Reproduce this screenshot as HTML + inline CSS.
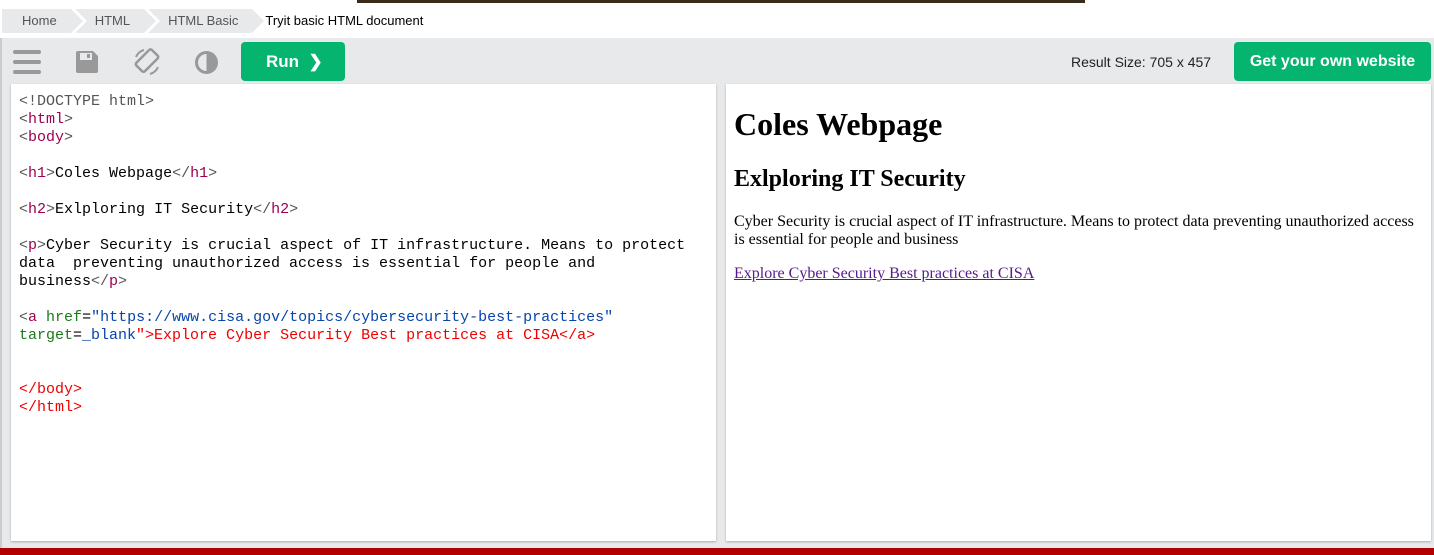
<!DOCTYPE html>
<html><head><style>
*{margin:0;padding:0;box-sizing:border-box}
body{width:1434px;height:555px;overflow:hidden;background:#fff;font-family:"Liberation Sans",sans-serif;position:relative}
.topimg{position:absolute;left:357px;top:0;width:728px;height:3px;background:#3a2a1a}
.bc{position:absolute;top:9px;left:2px;height:24px;display:flex;font-size:13px}
.bc div{background:#e8e9ea;color:#555;line-height:24px;padding:0 14px 0 20px;position:relative;margin-right:4px}
.bc div:after{content:"";position:absolute;right:-12px;top:0;border-left:12px solid #e8e9ea;border-top:12px solid transparent;border-bottom:12px solid transparent;z-index:2}
.bc div:before{content:"";position:absolute;left:0;top:0;border-left:12px solid #fff;border-top:12px solid transparent;border-bottom:12px solid transparent}
.bc div.f:before{display:none}
.bc span{line-height:24px;padding-left:9px;color:#000}
.tb{position:absolute;top:38px;left:0;width:1434px;height:510px;background:#e7e9eb;border-left:2px solid #ccc}
.run{position:absolute;left:241px;top:42px;width:104px;height:39px;background:#04b46f;border-radius:4px;color:#fff;font-weight:bold;font-size:17px;line-height:39px;padding-left:25px}
.gy{position:absolute;left:1234px;top:42px;width:197px;height:39px;background:#04b46f;border-radius:4px;color:#fff;font-weight:bold;font-size:16px;line-height:39px;text-align:center}
.rs{position:absolute;left:1071px;top:54px;font-size:14px;color:#222}
.pan{position:absolute;top:84px;height:457px;background:#fff;box-shadow:0 1px 2px #aaa}
pre{font-family:"Liberation Mono",monospace;font-size:15px;line-height:18px;position:absolute;left:19px;top:93px;color:#000}
.g{color:#555}.m{color:#a00050}.r{color:#e00}.b{color:#0645ad}.gr{color:#1a7a1a}
.res{position:absolute;left:734px;font-family:"Liberation Serif",serif;color:#000}
.red{position:absolute;left:0;top:548px;width:1434px;height:7px;background:#b00000}
</style></head><body>
<div class="topimg"></div>
<div class="bc"><div class="f">Home</div><div>HTML</div><div>HTML Basic</div><span>Tryit basic HTML document</span></div>
<div class="tb"></div>
<svg style="position:absolute;left:12px;top:48px" width="30" height="28"><rect x="1" y="2" width="28" height="4" rx="2" fill="#999"/><rect x="1" y="12" width="28" height="4" rx="2" fill="#999"/><rect x="1" y="22" width="28" height="4" rx="2" fill="#999"/></svg>
<svg style="position:absolute;left:75px;top:50px" width="24" height="24"><path d="M3 1h15l5 5v15a2 2 0 0 1-2 2H3a2 2 0 0 1-2-2V3a2 2 0 0 1 2-2z" fill="#999"/><rect x="5" y="3" width="12" height="7" fill="#e7e9eb"/><rect x="12" y="4" width="3" height="4" fill="#999"/></svg>
<svg style="position:absolute;left:132px;top:47px" width="30" height="30"><rect x="8" y="3" width="12" height="22" rx="2" transform="rotate(45 15 15)" fill="none" stroke="#999" stroke-width="2.5"/><path d="M4 10a12 12 0 0 1 8-7M26 20a12 12 0 0 1-8 7" fill="none" stroke="#999" stroke-width="2"/></svg>
<svg style="position:absolute;left:194px;top:50px" width="25" height="25"><circle cx="12.5" cy="12.5" r="10" fill="none" stroke="#999" stroke-width="3"/><path d="M12.5 2.5a10 10 0 0 1 0 20z" fill="#999"/></svg>
<div class="run">Run &nbsp;❯</div>
<div class="rs">Result Size: 705 x 457</div>
<div class="gy">Get your own website</div>
<div class="pan" style="left:11px;width:705px"></div>
<div class="pan" style="left:726px;width:705px"></div>
<pre><span class="g">&lt;!DOCTYPE html&gt;</span>
<span class="g">&lt;</span><span class="m">html</span><span class="g">&gt;</span>
<span class="g">&lt;</span><span class="m">body</span><span class="g">&gt;</span>

<span class="g">&lt;</span><span class="m">h1</span><span class="g">&gt;</span>Coles Webpage<span class="g">&lt;/</span><span class="m">h1</span><span class="g">&gt;</span>

<span class="g">&lt;</span><span class="m">h2</span><span class="g">&gt;</span>Exlploring IT Security<span class="g">&lt;/</span><span class="m">h2</span><span class="g">&gt;</span>

<span class="g">&lt;</span><span class="m">p</span><span class="g">&gt;</span>Cyber Security is crucial aspect of IT infrastructure. Means to protect
data  preventing unauthorized access is essential for people and
business<span class="g">&lt;/</span><span class="m">p</span><span class="g">&gt;</span>

<span class="g">&lt;</span><span class="m">a</span> <span class="gr">href</span>=<span class="b">"https://www.cisa.gov/topics/cybersecurity-best-practices"</span>
<span class="gr">target</span>=<span class="b">_blank</span><span class="r">"&gt;Explore Cyber Security Best practices at CISA&lt;/a&gt;</span>


<span class="r">&lt;/body&gt;</span>
<span class="r">&lt;/html&gt;</span></pre>
<div class="res" style="top:106px;font-size:32px;font-weight:bold">Coles Webpage</div>
<div class="res" style="top:166px;font-size:24px;font-weight:bold">Exlploring IT Security</div>
<div class="res" style="top:213px;font-size:16px;line-height:18px;width:690px">Cyber Security is crucial aspect of IT infrastructure. Means to protect data preventing unauthorized access is essential for people and business</div>
<div class="res" style="top:265px;font-size:16px;color:#551a8b;text-decoration:underline">Explore Cyber Security Best practices at CISA</div>
<div class="red"></div>
</body></html>
